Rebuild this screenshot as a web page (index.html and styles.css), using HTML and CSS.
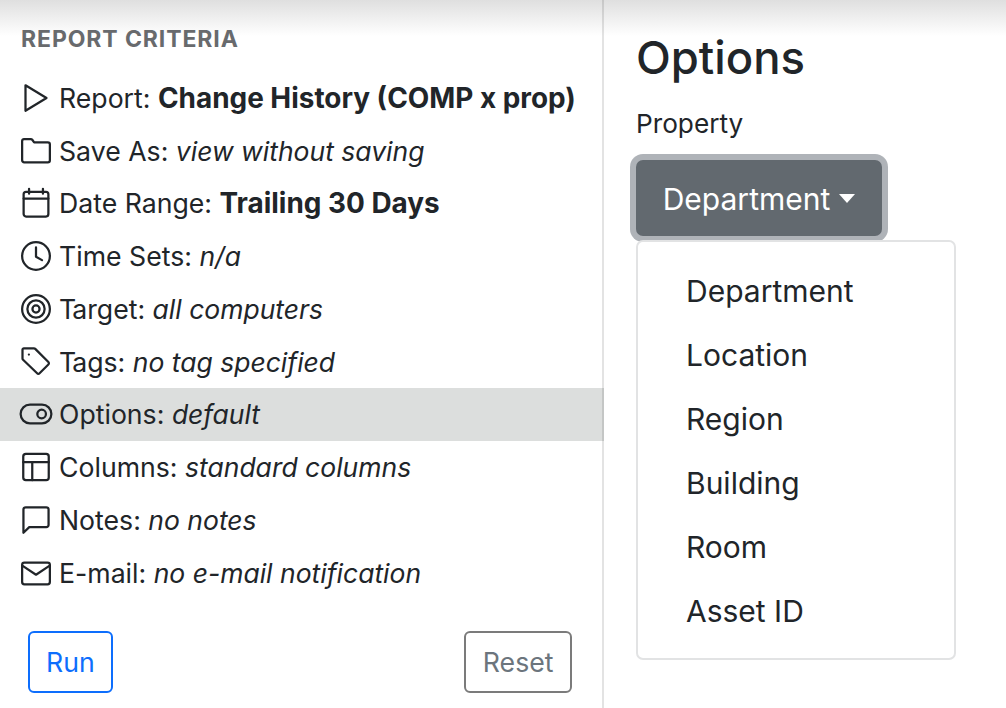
FILE: index.html
```html
<!DOCTYPE html>
<html lang="en">
<head>
<meta charset="utf-8">
<title>Report Criteria</title>
<link rel="stylesheet" href="styles.css">
</head>
<body>
<div class="app">
  <section class="criteria">
    <h6 class="criteria-title">REPORT CRITERIA</h6>
    <ul class="criteria-list">
      <li class="row"><svg class="icon" viewBox="0 0 16 16"><path d="M2.4 1.2 13.6 8 2.4 14.8z"/></svg><span>Report: <b>Change History (COMP x prop)</b></span></li>
      <li class="row"><svg class="icon" viewBox="0 0 16 16"><path d="M.6 4.5V2.6a1 1 0 0 1 1-1h3.6a1 1 0 0 1 .8.4L7 3.4h7.3a1.1 1.1 0 0 1 1.1 1.1v8.4a1.1 1.1 0 0 1-1.1 1.1H1.7a1.1 1.1 0 0 1-1.1-1.1z"/></svg><span>Save As: <i>view without saving</i></span></li>
      <li class="row"><svg class="icon" viewBox="0 0 16 16"><rect x="1.4" y="2" width="13.2" height="13.2" rx="1.3"/><path d="M1.4 5.6h13.2M4.3 .4v2.6M11.7 .4v2.6"/></svg><span>Date Range: <b>Trailing 30 Days</b></span></li>
      <li class="row"><svg class="icon" viewBox="0 0 16 16"><circle cx="8" cy="8" r="7.4"/><path d="M8 3.4v5l3.2 1.8"/></svg><span>Time Sets: <i>n/a</i></span></li>
      <li class="row"><svg class="icon" viewBox="0 0 16 16"><circle cx="8" cy="8" r="7.4"/><circle cx="8" cy="8" r="4.6"/><circle cx="8" cy="8" r="1.9"/></svg><span><span class="kern">T</span>arget: <i>all computers</i></span></li>
      <li class="row"><svg class="icon" viewBox="0 0 16 16"><path d="M.8 1.4a.7.7 0 0 1 .7-.7h5.4a1 1 0 0 1 .7.3l7 7a.9.9 0 0 1 0 1.3l-4.7 4.7a.9.9 0 0 1-1.3 0l-7.5-7.2a1 1 0 0 1-.3-.7z"/><circle class="dot" cx="4.2" cy="4" r=".6"/></svg><span><span class="kern">T</span>ags: <i>no tag specified</i></span></li>
      <li class="row row-active"><svg class="icon" viewBox="0 0 16 16"><rect x="-.2" y="3" width="16.4" height="10" rx="5"/><circle cx="11" cy="8" r="2.3"/></svg><span>Options: <i>default</i></span></li>
      <li class="row"><svg class="icon" viewBox="0 0 16 16"><rect x="1.2" y="1" width="13.6" height="14" rx="1.4"/><path d="M1.2 5.4h13.6M6 5.4V15"/></svg><span>Columns: <i>standard columns</i></span></li>
      <li class="row"><svg class="icon" viewBox="0 0 16 16"><path d="M1.3 2.4a1.2 1.2 0 0 1 1.2-1.2h11a1.2 1.2 0 0 1 1.2 1.2v8.2a1.2 1.2 0 0 1-1.2 1.2H4.4l-3.1 3z"/></svg><span>Notes: <i>no notes</i></span></li>
      <li class="row"><svg class="icon" viewBox="0 0 16 16"><rect x=".6" y="2.4" width="14.8" height="11.6" rx="1.2"/><path d="M.9 4.2 8 8.9l7.1-4.7"/></svg><span>E-mail: <i>no e-mail notification</i></span></li>
    </ul>
    <div class="actions">
      <button class="btn btn-run" type="button">Run</button>
      <button class="btn btn-reset" type="button">Reset</button>
    </div>
  </section>
  <section class="options">
    <h2 class="options-title">Options</h2>
    <div class="options-label">Property</div>
    <button class="dropdown-toggle" type="button">Department<span class="caret"></span></button>
    <ul class="dropdown-menu">
      <li>Department</li>
      <li>Location</li>
      <li>Region</li>
      <li>Building</li>
      <li>Room</li>
      <li>Asset ID</li>
    </ul>
  </section>
</div>
</body>
</html>
```
FILE: styles.css
```css
* { box-sizing: border-box; }
html, body { margin: 0; height: 100%; }
body {
  font-family: Inter, "Liberation Sans", sans-serif;
  font-size: 26.67px;
  color: #212529;
  background: linear-gradient(#dfdfdf 0, #ffffff 36px);
  overflow: hidden;
}
.app { display: flex; height: 708px; }
.criteria {
  width: 604px;
  flex: none;
  border-right: 2px solid rgba(0, 0, 0, 0.11);
  padding-top: 25px;
}
.criteria-title {
  margin: 0 0 18.5px 21px;
  font-size: 23px;
  line-height: 28px;
  font-weight: 700;
  color: #686a6d;
  letter-spacing: 0.9px;
}
.criteria-list { list-style: none; margin: 0; padding: 0; }
.row {
  display: flex;
  align-items: center;
  gap: 8px;
  height: 52.75px;
  padding-left: 21px;
  white-space: nowrap;
}
.row b { font-size: 27.9px; }
.row i { font-size: 26.5px; }
.kern { letter-spacing: -4px; }
.row-active {
  background: #dcdedd;
  margin-right: -2px;
  border-right: 2px solid #c4c6c5;
}
.icon {
  width: 30px;
  height: 30px;
  flex: none;
  fill: none;
  stroke: #212529;
  stroke-width: 1.2;
  stroke-linejoin: round;
  stroke-linecap: round;
  overflow: visible;
}
.icon .dot { fill: #212529; stroke: none; }
.actions {
  display: flex;
  justify-content: space-between;
  padding: 32px 30px 0 28px;
}
.btn {
  font: inherit;
  height: 62px;
  background: #fff;
  border-radius: 6px;
  border: 2px solid;
}
.btn-run { color: #0d6efd; border-color: #0d6efd; padding: 0 16px; }
.btn-reset { color: #6c757d; border-color: #7b7b7b; padding: 0 16.5px; }
.options { flex: 1; padding: 28px 0 0 32px; }
.options-title {
  margin: 0;
  font-size: 45.4px;
  line-height: 60px;
  font-weight: 500;
}
.options-label { font-size: 26.2px; line-height: 40px; margin-top: 16px; }
.dropdown-toggle {
  display: block;
  font: inherit;
  font-size: 30px;
  color: #fff;
  background: #62696f;
  border: 0;
  border-radius: 7px;
  width: 246px;
  height: 76px;
  padding: 2px 0 0;
  margin: 16px 0 4px;
  box-shadow: 0 0 0 6px #afb3b8;
}
.caret {
  display: inline-block;
  margin-left: 9px;
  vertical-align: 7px;
  border-top: 9px solid #fff;
  border-left: 8.5px solid transparent;
  border-right: 8.5px solid transparent;
}
.dropdown-menu {
  list-style: none;
  margin: 0;
  width: 320px;
  height: 420px;
  padding: 17px 0;
  border: 2px solid #e2e3e4;
  border-radius: 7px;
  background: #fff;
  font-size: 30px;
}
.dropdown-menu li { height: 64px; line-height: 64px; padding-left: 48px; }
```
